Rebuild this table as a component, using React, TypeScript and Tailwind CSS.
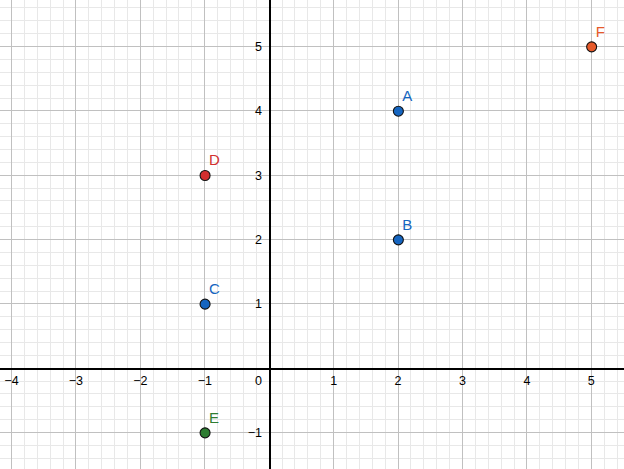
import React from "react";

const OX = 269.2;
const OY = 368.2;
const UX = 64.43;
const UY = 64.33;
const X = (v: number) => OX + v * UX;
const Y = (v: number) => OY - v * UY;

const W = 624;
const H = 469;

const points = [
  { n: "A", x: 2, y: 4, fill: "#1565c0", text: "#1565c0" },
  { n: "B", x: 2, y: 2, fill: "#1565c0", text: "#1565c0" },
  { n: "C", x: -1, y: 1, fill: "#1565c0", text: "#1565c0" },
  { n: "D", x: -1, y: 3, fill: "#d32f2f", text: "#d32f2f" },
  { n: "E", x: -1, y: -1, fill: "#2e7d32", text: "#2e7d32" },
  { n: "F", x: 5, y: 5, fill: "#e65a2a", text: "#e65a2a" },
];

export default function App() {
  const minorV: number[] = [];
  const majorV: number[] = [];
  for (let i = -30; i <= 40; i++) {
    const px = X(i / 5);
    if (px < -1 || px > W + 1) continue;
    const p = Math.floor(px) + 0.5;
    if (i % 5 === 0) majorV.push(p);
    else minorV.push(p);
  }
  const minorH: number[] = [];
  const majorH: number[] = [];
  for (let i = -15; i <= 35; i++) {
    const py = Y(i / 5);
    if (py < -1 || py > H + 1) continue;
    const p = Math.floor(py) + 0.5;
    if (i % 5 === 0) majorH.push(p);
    else minorH.push(p);
  }
  const xLabels = [-4, -3, -2, -1, 1, 2, 3, 4, 5];
  const yLabels = [-1, 1, 2, 3, 4, 5];
  const fmt = (k: number) => (k < 0 ? "\u2212" + Math.abs(k) : String(k));

  return (
    <div className="w-[624px] h-[469px] bg-white overflow-hidden">
      <svg width={W} height={H} viewBox={`0 0 ${W} ${H}`} className="block">
        <g shapeRendering="crispEdges">
          {minorV.map((p, i) => (
            <line key={"mv" + i} x1={p} y1={0} x2={p} y2={H} stroke="#e8e8e8" strokeWidth={1} />
          ))}
          {minorH.map((p, i) => (
            <line key={"mh" + i} x1={0} y1={p} x2={W} y2={p} stroke="#e8e8e8" strokeWidth={1} />
          ))}
          {majorV.map((p, i) => (
            <line key={"Mv" + i} x1={p} y1={0} x2={p} y2={H} stroke="#c0c0c0" strokeWidth={1} />
          ))}
          {majorH.map((p, i) => (
            <line key={"Mh" + i} x1={0} y1={p} x2={W} y2={p} stroke="#c0c0c0" strokeWidth={1} />
          ))}
          <line x1={270} y1={0} x2={270} y2={H} stroke="#000" strokeWidth={2} />
          <line x1={0} y1={369} x2={W} y2={369} stroke="#000" strokeWidth={2} />
        </g>
        <g fontFamily="'Liberation Sans', Arial, sans-serif" fontSize={12.5} fill="#000">
          {xLabels.map((k) => (
            <text key={"xl" + k} x={X(k)} y={384.5} textAnchor="middle">
              {fmt(k)}
            </text>
          ))}
          <text x={262} y={384.5} textAnchor="end">
            0
          </text>
          {yLabels.map((k) => (
            <text key={"yl" + k} x={262} y={Y(k) + 4.6} textAnchor="end">
              {fmt(k)}
            </text>
          ))}
        </g>
        {points.map((pt) => {
          const cx = X(pt.x) + 0.3;
          const cy = Y(pt.y) + 0.3;
          return (
            <g key={pt.n}>
              <circle cx={cx} cy={cy} r={5} fill={pt.fill} stroke="#111" strokeWidth={1.1} />
              <text
                x={cx + 4}
                y={cy - 10.2}
                fontFamily="'Liberation Sans', Arial, sans-serif"
                fontSize={15}
                fill={pt.text}
              >
                {pt.n}
              </text>
            </g>
          );
        })}
      </svg>
    </div>
  );
}
